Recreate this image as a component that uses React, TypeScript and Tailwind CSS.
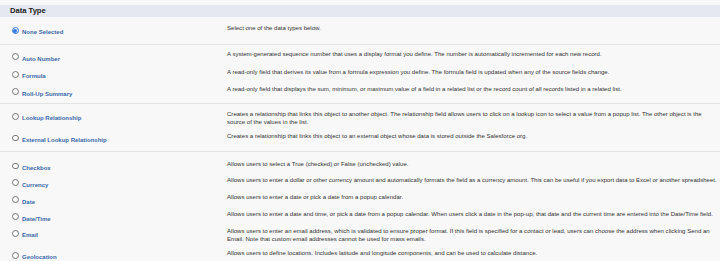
type DataTypeOption = {
  label: string;
  description: string;
  checked?: boolean;
  descWidth?: string;
};

type Group = {
  options: DataTypeOption[];
  className: string;
  rowClassName: string;
};

const GROUPS: Group[] = [
  {
    className: "pt-[4.95px] pb-[5.3px]",
    rowClassName: "py-[3.2px]",
    options: [
      { label: "None Selected", description: "Select one of the data types below.", checked: true },
    ],
  },
  {
    className: "border-t border-[#e4e4e4] pt-[2.9px] pb-[2.9px]",
    rowClassName: "py-[3.55px]",
    options: [
      {
        label: "Auto Number",
        description:
          "A system-generated sequence number that uses a display format you define. The number is automatically incremented for each new record.",
      },
      {
        label: "Formula",
        description:
          "A read-only field that derives its value from a formula expression you define. The formula field is updated when any of the source fields change.",
      },
      {
        label: "Roll-Up Summary",
        description:
          "A read-only field that displays the sum, minimum, or maximum value of a field in a related list or the record count of all records listed in a related list.",
      },
    ],
  },
  {
    className: "border-t border-[#e4e4e4] pt-[3.65px] pb-[5.2px]",
    rowClassName: "py-[3.2px]",
    options: [
      {
        label: "Lookup Relationship",
        description:
          "Creates a relationship that links this object to another object. The relationship field allows users to click on a lookup icon to select a value from a popup list. The other object is the source of the values in the list.",
        descWidth: "w-[482px]",
      },
      {
        label: "External Lookup Relationship",
        description:
          "Creates a relationship that links this object to an external object whose data is stored outside the Salesforce org.",
      },
    ],
  },
  {
    className: "border-t border-[#e4e4e4] pt-[5px]",
    rowClassName: "py-[3.25px]",
    options: [
      { label: "Checkbox", description: "Allows users to select a True (checked) or False (unchecked) value." },
      {
        label: "Currency",
        description:
          "Allows users to enter a dollar or other currency amount and automatically formats the field as a currency amount. This can be useful if you export data to Excel or another spreadsheet.",
      },
      { label: "Date", description: "Allows users to enter a date or pick a date from a popup calendar." },
      {
        label: "Date/Time",
        description:
          "Allows users to enter a date and time, or pick a date from a popup calendar. When users click a date in the pop-up, that date and the current time are entered into the Date/Time field.",
      },
      {
        label: "Email",
        description:
          "Allows users to enter an email address, which is validated to ensure proper format. If this field is specified for a contact or lead, users can choose the address when clicking Send an Email. Note that custom email addresses cannot be used for mass emails.",
      },
      {
        label: "Geolocation",
        description:
          "Allows users to define locations. Includes latitude and longitude components, and can be used to calculate distance.",
      },
    ],
  },
];

function Radio({ checked }: { checked?: boolean }) {
  if (checked) {
    return (
      <span className="mt-[2px] flex h-[6.8px] w-[6.8px] shrink-0 items-center justify-center rounded-full border-[0.8px] border-[#2f7ae5] bg-white">
        <span className="h-[4px] w-[4px] rounded-full bg-[#2f7ae5]" />
      </span>
    );
  }
  return (
    <span className="mt-[2px] block h-[6.8px] w-[6.8px] shrink-0 rounded-full border-[0.8px] border-[#767676] bg-white" />
  );
}

function OptionRow({ option, rowClassName }: { option: DataTypeOption; rowClassName: string }) {
  return (
    <div className={`flex ${rowClassName}`}>
      <div className="flex w-[227px] shrink-0 items-start gap-[3.2px] pl-[12px]">
        <Radio checked={option.checked} />
        <span className="pt-[4.35px] text-[6px] font-bold leading-[6px] text-[#3a69aa]">{option.label}</span>
      </div>
      <p className={`${option.descWidth ?? "w-[491px]"} text-[6.05px] leading-[7.7px] text-[#333333]`}>
        {option.description}
      </p>
    </div>
  );
}

export default function App() {
  return (
    <div className="h-[261px] w-[720px] overflow-hidden bg-[#f8f8f8] pt-[5px] font-['Liberation_Sans',Arial,sans-serif]">
      <div className="flex h-[12px] items-center bg-[#e5e8f0] pl-[10px]">
        <h3 className="text-[7.6px] font-bold leading-none text-[#222222]">Data Type</h3>
      </div>
      {GROUPS.map((group, i) => (
        <div key={i} className={group.className}>
          {group.options.map((option) => (
            <OptionRow key={option.label} option={option} rowClassName={group.rowClassName} />
          ))}
        </div>
      ))}
    </div>
  );
}
